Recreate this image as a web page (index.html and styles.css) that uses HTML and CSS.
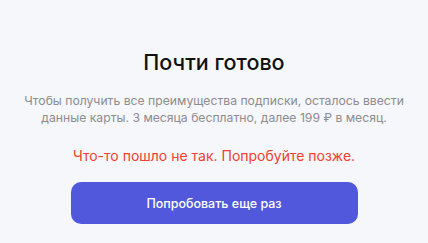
FILE: index.html
```html
<!DOCTYPE html>
<html lang="ru">
<head>
    <meta charset="UTF-8">
    <meta name="viewport" content="width=device-width, initial-scale=1.0">
    <title>Почти готово</title>
    <link rel="stylesheet" href="styles.css">
</head>
<body>
    <div class="main">
        <h1 class="title">Почти готово</h1>
        <p class="desc">Чтобы получить все преимущества подписки, осталось ввести данные карты. 3 месяца бесплатно, далее 199 ₽ в месяц.</p>
        <p class="error">Что-то пошло не так. Попробуйте позже.</p>
        <button class="retry">Попробовать еще раз</button>
    </div>
</body>
</html>
```

FILE: styles.css
```css
body{
    margin: 0;
    background-color: #f6f7fb;
    font-family: "Inter", "Noto Sans", sans-serif;
}
.main{
    display: flex;
    flex-direction: column;
    align-items: center;
    padding: 48px 0 0 0;
}
.title{
    margin: 0;
    font-size: 21.5px;
    font-weight: 500;
    line-height: 28px;
    color: #111;
}
.desc{
    max-width: 400px;
    margin: 16px 0 0 0;
    font-size: 12.2px;
    line-height: 17px;
    color: #8c8c8f;
    text-align: center;
}
.error{
    margin: 20px 0 0 0;
    font-size: 14px;
    line-height: 20px;
    color: #f0402f;
}
.retry{
    margin-top: 16px;
    width: 287px;
    height: 42px;
    border: none;
    border-radius: 10px;
    background-color: #5158dc;
    color: #fff;
    font-family: inherit;
    font-size: 12.5px;
    font-weight: 500;
}
```
